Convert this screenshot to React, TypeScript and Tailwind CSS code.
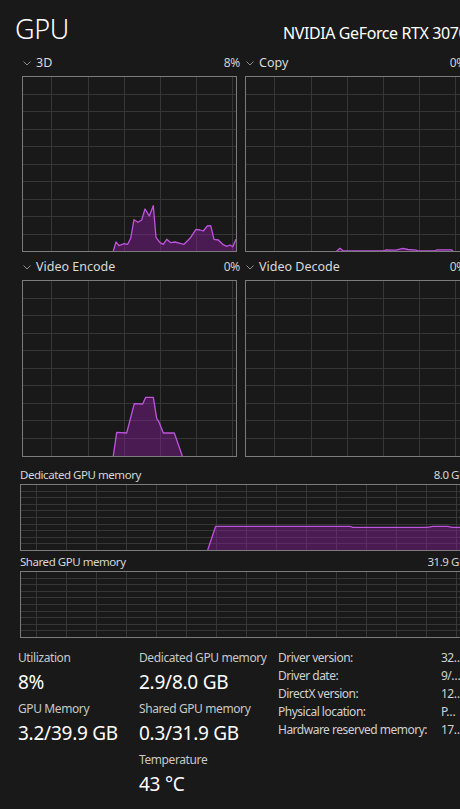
import React from "react";

type Pt = [number, number];

const data3D: Pt[] = [
  [90.3, 174], [93, 165], [96, 168.7], [101, 166.7], [104.7, 167.3], [107.7, 161.3], [111, 142.7],
  [115, 145.3], [118.7, 143], [122, 132], [123.7, 134.7], [126.3, 139], [130.3, 128.7], [133, 160.3],
  [137, 165.7], [140.3, 167.3], [143.7, 162.3], [147.7, 165.7], [152, 165], [157, 166.3], [161, 167.3],
  [167, 161.3], [173, 152.3], [177, 153], [180.3, 154], [184.3, 149], [187.7, 148.7], [191, 162.3],
  [195.3, 163], [199.7, 167.3], [203.7, 169.3], [207, 168], [209.7, 169.7], [213, 162.3],
];

const dataCopy: Pt[] = [
  [90.7, 174], [94, 171.3], [97.3, 174], [138, 174], [140, 172.8], [146, 173.2], [150, 173.2],
  [156.7, 171.3], [162, 172.5], [170, 173.2], [172, 174], [189, 174], [191, 172.8], [200, 172.8],
  [205.7, 172.9], [207, 174],
];

const dataEncode: Pt[] = [
  [90.3, 175], [93.7, 151.3], [103.7, 152], [111.3, 122.7], [119.7, 123], [122.7, 116.3], [130.3, 116.3],
  [133.7, 137.3], [136.3, 141.7], [140.3, 152], [151.3, 152], [159.3, 175],
];

const dataDedicated: Pt[] = [
  [186.7, 65], [194.7, 41.3], [329, 41.3], [332, 42.3], [406, 42.3], [412, 41.3], [427, 41.3],
  [431, 42.3], [450, 42.3],
];

function Chart({
  className,
  h,
  w,
  colStart,
  colStep,
  rowStep,
  rows,
  data,
}: {
  className: string;
  h: number;
  w: number;
  colStart: number;
  colStep: number;
  rowStep: number;
  rows: number;
  data?: Pt[];
}) {
  const vlines: number[] = [];
  for (let x = colStart; x < w; x += colStep) vlines.push(Math.round(x) + 0.5);
  const hlines: number[] = [];
  for (let k = 1; k < rows; k++) hlines.push(Math.round(k * rowStep - 1) + 0.5);
  let area = "";
  let line = "";
  if (data && data.length) {
    line = data.map((p) => `${p[0]},${p[1]}`).join(" ");
    area = `M${data[0][0]},${h} ` + data.map((p) => `L${p[0]},${p[1]}`).join(" ") + ` L${data[data.length - 1][0]},${h} Z`;
  }
  return (
    <div className={`relative border border-[#7b7b7b] overflow-hidden ${className}`}>
      <svg className="absolute inset-0 h-full w-full">
        {vlines.map((x) => (
          <line key={"v" + x} x1={x} y1={0} x2={x} y2={h} stroke="#363636" strokeWidth={1} />
        ))}
        {hlines.map((y) => (
          <line key={"h" + y} x1={0} y1={y} x2={w} y2={y} stroke="#363636" strokeWidth={1} />
        ))}
        {data && <path d={area} fill="rgb(142,28,165)" fillOpacity={0.42} />}
        {data && <polyline points={line} fill="none" stroke="#bd55dc" strokeWidth={1.3} strokeLinejoin="round" />}
      </svg>
    </div>
  );
}

function Chevron() {
  return (
    <svg width="8" height="5" viewBox="0 0 8 5" className="shrink-0">
      <polyline points="0.5,0.5 4,4 7.5,0.5" fill="none" stroke="#8c8c8c" strokeWidth="1" />
    </svg>
  );
}

function GraphHeader({ title, pct }: { title: string; pct: string }) {
  return (
    <div className="flex h-[26px] items-center justify-between -mr-[3px] text-[12.5px] text-[#dadada] whitespace-nowrap">
      <div className="flex items-center gap-[5px] pl-[1px]">
        <Chevron />
        <span>{title}</span>
      </div>
      <span className="text-[12px] tracking-[-0.3px] text-[#d0d0d0]">{pct}</span>
    </div>
  );
}

function Stat({ label, value }: { label: string; value: string }) {
  return (
    <div className="mb-[3px]">
      <div className="text-[12px] leading-[18px] tracking-[-0.4px] text-[#c8c8c8] whitespace-nowrap">{label}</div>
      <div className="text-[19px] leading-[30px] tracking-[-0.25px] text-white whitespace-nowrap">{value}</div>
    </div>
  );
}

export default function App() {
  const props = [
    ["Driver version:", "32…"],
    ["Driver date:", "9/…"],
    ["DirectX version:", "12…"],
    ["Physical location:", "P…"],
    ["Hardware reserved memory:", "17…"],
  ];
  return (
    <div className="w-[460px] h-[809px] overflow-hidden bg-[#191919] text-white font-['Noto_Sans',sans-serif]">
      <div className="flex h-[50px] items-baseline pt-[15px] whitespace-nowrap">
        <span className="w-[283px] shrink-0 pl-[15px] text-[27px] leading-none font-light tracking-[-0.3px]">GPU</span>
        <span className="shrink-0 text-[16px] leading-none tracking-[-0.4px]">NVIDIA GeForce RTX 3070 Laptop GPU</span>
      </div>

      <div className="flex flex-col gap-[2px] pl-[22px]">
        <div className="flex gap-[8px]">
          <div className="flex w-[215px] shrink-0 flex-col">
            <GraphHeader title="3D" pct="8%" />
            <Chart className="h-[176px] w-[215px]" h={174} w={213} colStart={28.3} colStep={36.2} rowStep={17.5} rows={10} data={data3D} />
          </div>
          <div className="flex w-[218px] shrink-0 flex-col">
            <GraphHeader title="Copy" pct="0%" />
            <Chart className="h-[176px] w-[218px]" h={174} w={216} colStart={28.3} colStep={36.2} rowStep={17.5} rows={10} data={dataCopy} />
          </div>
        </div>
        <div className="flex gap-[8px]">
          <div className="flex w-[215px] shrink-0 flex-col">
            <GraphHeader title="Video Encode" pct="0%" />
            <Chart className="h-[177px] w-[215px]" h={175} w={213} colStart={28.3} colStep={36.2} rowStep={17.5} rows={10} data={dataEncode} />
          </div>
          <div className="flex w-[218px] shrink-0 flex-col">
            <GraphHeader title="Video Decode" pct="0%" />
            <Chart className="h-[177px] w-[218px]" h={175} w={216} colStart={28.3} colStep={36.2} rowStep={17.5} rows={10} />
          </div>
        </div>
      </div>

      <div className="mt-[9px] w-[466px] pl-[20px]">
        <div className="flex h-[18px] items-center justify-between text-[11.5px] tracking-[-0.45px] text-[#d6d6d6] whitespace-nowrap">
          <span>Dedicated GPU memory</span>
          <span>8.0 GB</span>
        </div>
        <Chart className="h-[67px] w-[446px]" h={65} w={444} colStart={14.7} colStep={30} rowStep={6.6} rows={10} data={dataDedicated} />
        <div className="mt-[2px] flex h-[18px] items-center justify-between text-[11.5px] tracking-[-0.45px] text-[#d6d6d6] whitespace-nowrap">
          <span>Shared GPU memory</span>
          <span>31.9 GB</span>
        </div>
        <Chart className="h-[67px] w-[446px]" h={65} w={444} colStart={14.7} colStep={30} rowStep={6.6} rows={10} />
      </div>

      <div className="mt-[11px] flex">
        <div className="w-[139px] shrink-0 pl-[18px]">
          <Stat label="Utilization" value="8%" />
          <Stat label="GPU Memory" value="3.2/39.9 GB" />
        </div>
        <div className="w-[139px] shrink-0">
          <Stat label="Dedicated GPU memory" value="2.9/8.0 GB" />
          <Stat label="Shared GPU memory" value="0.3/31.9 GB" />
          <Stat label="Temperature" value="43 °C" />
        </div>
        <div className="flex shrink-0 text-[12px] leading-[18px] tracking-[-0.5px] text-[#d0d0d0] whitespace-nowrap">
          <div className="w-[163px]">
            {props.map(([k]) => (
              <div key={k}>{k}</div>
            ))}
          </div>
          <div>
            {props.map(([k, v]) => (
              <div key={k}>{v}</div>
            ))}
          </div>
        </div>
      </div>
    </div>
  );
}
